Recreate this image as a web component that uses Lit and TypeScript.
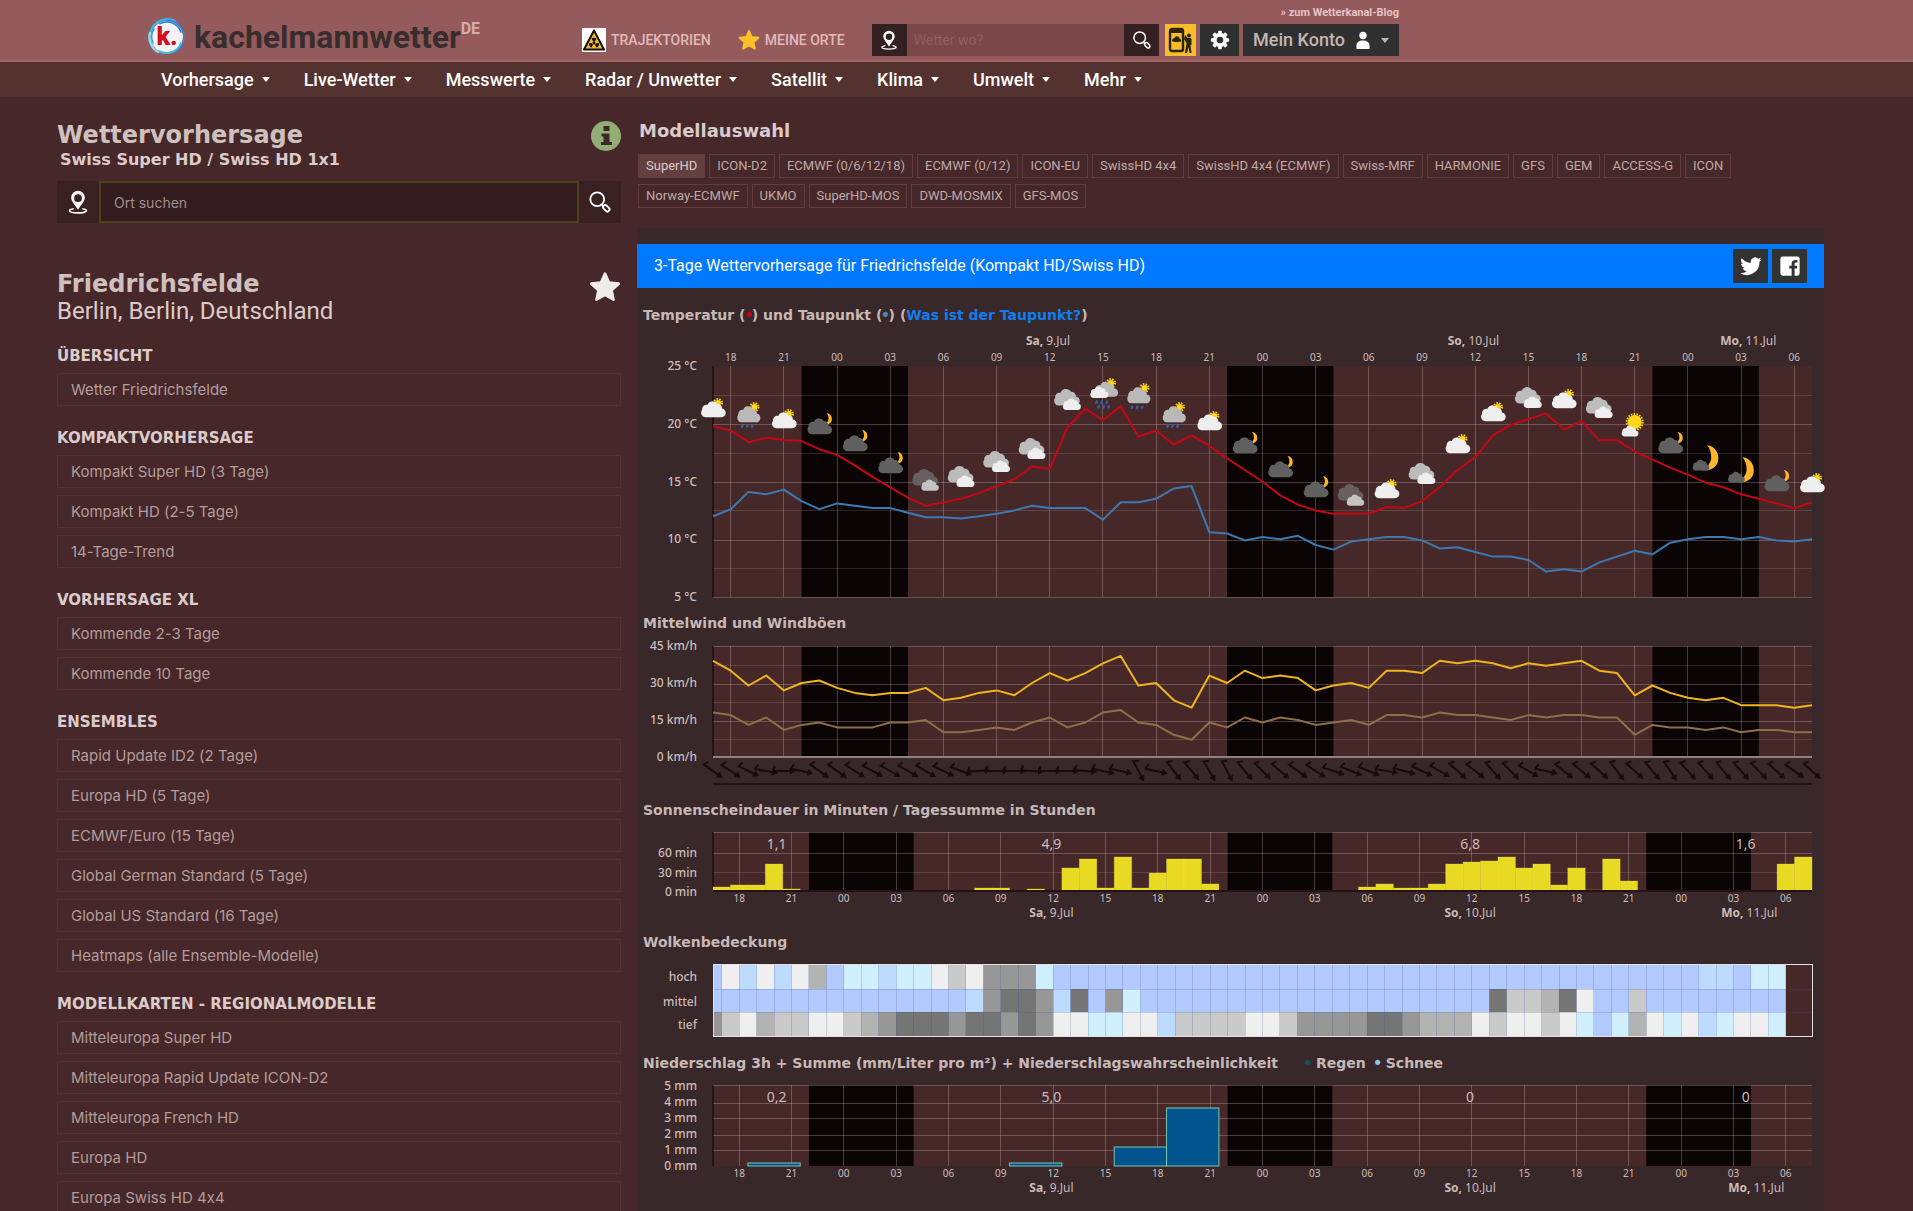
import { LitElement, html, svg, css, nothing } from "lit";
import { customElement } from "lit/decorators.js";

/* ---------- navigation and list data ---------- */

const NAV = ["Vorhersage", "Live-Wetter", "Messwerte", "Radar / Unwetter", "Satellit", "Klima", "Umwelt", "Mehr"];

const MODELS = [
  "SuperHD", "ICON-D2", "ECMWF (0/6/12/18)", "ECMWF (0/12)", "ICON-EU", "SwissHD 4x4", "SwissHD 4x4 (ECMWF)",
  "Swiss-MRF", "HARMONIE", "GFS", "GEM", "ACCESS-G", "ICON",
  "Norway-ECMWF", "UKMO", "SuperHD-MOS", "DWD-MOSMIX", "GFS-MOS",
];

const GROUPS: { title: string; items: string[] }[] = [
  { title: "Übersicht", items: ["Wetter Friedrichsfelde"] },
  { title: "Kompaktvorhersage", items: ["Kompakt Super HD (3 Tage)", "Kompakt HD (2-5 Tage)", "14-Tage-Trend"] },
  { title: "Vorhersage XL", items: ["Kommende 2-3 Tage", "Kommende 10 Tage"] },
  {
    title: "Ensembles",
    items: [
      "Rapid Update ID2 (2 Tage)", "Europa HD (5 Tage)", "ECMWF/Euro (15 Tage)",
      "Global German Standard (5 Tage)", "Global US Standard (16 Tage)", "Heatmaps (alle Ensemble-Modelle)",
    ],
  },
  {
    title: "Modellkarten - Regionalmodelle",
    items: ["Mitteleuropa Super HD", "Mitteleuropa Rapid Update ICON-D2", "Mitteleuropa French HD", "Europa HD", "Europa Swiss HD 4x4"],
  },
];

/* ---------- forecast data, hourly from Friday 17:00 ---------- */

const TEMP = [
  19.8, 19.4, 18.4, 18.8, 18.6, 18.5, 17.8, 17.3, 16.4, 15.4, 14.5, 13.6, 12.9, 13.2, 13.5, 14.0, 14.6, 15.2, 16.3, 16.1,
  19.7, 21.3, 20.3, 21.5, 18.9, 19.4, 18.2, 19.0, 18.1, 17.0, 16.0, 15.0, 13.8, 13.0, 12.5, 12.2, 12.2, 12.2, 12.8, 12.7,
  13.3, 14.5, 16.0, 17.1, 19.0, 19.9, 20.4, 20.9, 19.5, 20.2, 18.6, 18.6, 17.6, 16.9, 16.2, 15.6, 14.9, 14.5, 13.9, 13.5,
  13.1, 12.7, 13.2,
];
const DEW = [
  12.0, 12.6, 14.1, 13.9, 14.3, 13.3, 12.6, 13.1, 12.9, 12.7, 12.7, 12.3, 11.9, 11.9, 11.8, 12.0, 12.2, 12.5, 12.9, 12.7,
  12.7, 12.7, 11.7, 13.2, 13.2, 13.5, 14.4, 14.6, 10.6, 10.5, 9.9, 10.2, 10.0, 10.3, 9.5, 9.1, 9.8, 10.0, 10.2, 10.2,
  9.9, 9.2, 9.3, 8.9, 8.5, 8.5, 8.2, 7.2, 7.4, 7.2, 8.0, 8.5, 9.0, 8.7, 9.7, 10.0, 10.2, 10.2, 10.0, 10.2,
  9.9, 9.8, 10.0,
];
const GUST = [
  39, 35, 29, 33, 27, 30, 31, 28, 26, 25, 26, 26, 28, 23, 24, 26, 27, 25, 30, 34, 31, 34, 38, 41, 29, 30, 23, 20, 33, 30,
  35, 32, 33, 32, 27, 29, 30, 28, 35, 35, 34, 39, 38, 39, 38, 36, 38, 37, 38, 39, 35, 34, 25, 29, 26, 24, 23, 24, 21, 21,
  21, 20, 21,
];
const WIND = [
  18, 17, 13, 16, 11, 13, 14, 12, 12, 12, 14, 14, 15, 10, 10, 11, 12, 11, 14, 16, 12, 14, 18, 19, 14, 13, 9, 7, 14, 12,
  16, 14, 16, 15, 13, 14, 15, 13, 17, 17, 16, 18, 17, 17, 16, 15, 17, 16, 17, 17, 16, 16, 9, 13, 12, 12, 11, 12, 10, 11,
  11, 10, 10,
];
const WIND_ANGLE = [
  35, 33, 26, 10, 0, 12, 35, 35, 33, 28, 30, 30, 30, 26, 20, -3, 0, 0, 3, 0, 0, 4, 12, 12, 62, 12, 52, 50, 60, 62,
  50, 45, 40, 35, 33, 18, 22, 22, 10, 15, 25, 30, 42, 38, 48, 45, 30, 12, 38, 40, 42, 52, 42, 50, 56, 48, 48, 50, 48, 45,
  42, 35, 42,
];

type Kind = "sunCloud" | "sunRain" | "sunShower" | "moonCloud" | "darkClouds" | "clouds" | "sunny" | "moon";
const SYMBOLS: [Kind, number][] = [
  ["sunCloud", 83], ["sunRain", 90], ["sunCloud", 94], ["moonCloud", 100], ["moonCloud", 117], ["moonCloud", 139],
  ["darkClouds", 155], ["clouds", 151], ["clouds", 136], ["clouds", 123], ["clouds", 74], ["sunShower", 66],
  ["sunRain", 71], ["sunRain", 90], ["sunCloud", 96], ["moonCloud", 119], ["moonCloud", 143], ["moonCloud", 163],
  ["darkClouds", 170], ["sunCloud", 164], ["clouds", 148], ["sunCloud", 119], ["sunCloud", 87], ["clouds", 72],
  ["sunCloud", 74], ["clouds", 82], ["sunny", 99], ["moonCloud", 119], ["moon", 133], ["moon", 145],
  ["moonCloud", 157], ["sunCloud", 158],
];

/* hour offset from Friday 16:30 → minutes of sunshine */
const SUN: [number, number][] = [
  [0, 7], [1, 9], [2, 9], [3, 42], [4, 3], [15, 4], [16, 4], [18, 3], [20, 37], [21, 51], [22, 4], [23, 54], [24, 5],
  [25, 29], [26, 51], [27, 51], [28, 11], [37, 7], [38, 11], [39, 5], [40, 4], [41, 11], [42, 43], [43, 45], [44, 47],
  [45, 54], [46, 37], [47, 43], [48, 9], [49, 37], [50, 2], [51, 50], [52, 16], [61, 42], [62, 54],
];
const RAIN: [number, number][] = [[2, 0.2], [17, 0.2], [23, 1.2], [26, 3.6]];

/* one letter per hour, the first one covers half an hour */
const CLOUD_ROWS = [
  { y: 12, h: 25, cells: "b" + "wcwcwmb" + "llcllwgwdddlbbbbbbbbbbbb" + "bbbbbbbbbbbbbbbbbbbbbbbb" + "bccbll" },
  { y: 37, h: 23, cells: "b" + "bbbbbbb" + "bbbbbbbcdkkdckbdlbbbbbbb" + "bbbbbbbbbbbbbkggmkwbbgbb" + "bbbbbb" },
  { y: 60, h: 24, cells: "d" + "gwmggww" + "gmdkkkdkkdkdwwllwwcggggw" + "wgddddkkdmmmwgwwgwlblmwl" + "wclwwl" },
];
const CLOUD_COLORS: Record<string, string> = {
  b: "#b2caff", c: "#bcdbff", l: "#d0efff", w: "#efefef", g: "#cacaca", m: "#b3b3b3", d: "#979797", k: "#757575",
};

/* ---------- chart scales ---------- */

interface Scale { start: number; span: number }
const LINES: Scale = { start: 17, span: 62 };
const BARS: Scale = { start: 16.5, span: 63 };
const pct = (hour: number, s: Scale) => `${(((hour - s.start) / s.span) * 100).toFixed(3)}%`;
const part = (hours: number, s: Scale) => `${((hours / s.span) * 100).toFixed(3)}%`;
const NIGHTS = [22, 46, 70];
const TICKS = Array.from({ length: 21 }, (_, i) => 18 + i * 3);
const two = (h: number) => String(h % 24).padStart(2, "0");

const backdrop = (s: Scale, y: number, h: number) => svg`
  <rect class="plot" x="0" y=${y} width="100%" height=${h}></rect>
  ${NIGHTS.map((n) => svg`<rect class="night" x=${pct(n, s)} y=${y} width=${part(6, s)} height=${h}></rect>`)}
  ${TICKS.map((t) => svg`<line class="grid" x1=${pct(t, s)} x2=${pct(t, s)} y1=${y} y2=${y + h}></line>`)}
  <line class="axis" x1="0" x2="0" y1=${y} y2=${y + h}></line>`;

const rule = (y: number, cls = "grid") => svg`<line class=${cls} x1="0" x2="100%" y1=${y} y2=${y}></line>`;
const yLabel = (y: number, text: string) => svg`<text class="ylabel" x="-16" y=${y + 4}>${text}</text>`;
const hours = (s: Scale, y: number) =>
  TICKS.map((t) => svg`<text class="hour" x=${pct(t, s)} y=${y}>${two(t)}</text>`);
const dates = (s: Scale, y: number, last: number) =>
  ([["Sa", "9.Jul", 35.9], ["So", "10.Jul", 59.9], ["Mo", "11.Jul", last]] as [string, string, number][]).map(
    ([day, rest, at]) => svg`<text class="date" x=${pct(at, s)} y=${y}><tspan class="day">${day},</tspan> ${rest}</text>`,
  );
const totals = (values: string[], y: number) =>
  values.map((v, i) => svg`<text class="total" x=${pct([20.15, 35.9, 59.9, 75.7][i], BARS)} y=${y}>${v}</text>`);

const points = (data: number[], max: number, scale: number) =>
  data.map((v, i) => `${i},${((max - v) * scale).toFixed(1)}`).join(" ");
const curve = (data: number[], max: number, min: number, y: number, h: number, cls: string) => svg`
  <svg class="layer" x="0" y=${y} width="100%" height=${h} viewBox=${`0 0 62 ${h}`} preserveAspectRatio="none">
    <polyline class=${cls} points=${points(data, max, h / (max - min))}></polyline>
  </svg>`;

/* ---------- weather symbols, centred on 0,0 ---------- */

const cloud = (fill: string, transform = "") => svg`
  <path transform=${transform} fill=${fill}
    d="M-8 8.500a4.800 4.800 0 0 1-3.400-7.800A4.500 4.500 0 0 1-6-4.200 6 6 0 0 1 4.600-5.200 4.600 4.600 0 0 1 9.400-.6 4.600 4.600 0 0 1 8 8.500z"></path>`;
const sun = (x: number, y: number, r: number) => svg`
  <g transform=${`translate(${x} ${y})`}>
    <circle r=${r} fill="#ffd61c"></circle>
    <circle r=${r + 1} fill="none" stroke="#ffd61c" stroke-width="2" stroke-dasharray="1.5 1.3"></circle>
  </g>`;
const moon = (transform: string) => svg`
  <path transform=${transform} fill="#fdb62b" d="M-1-7.500C4-7 6.500-2.500 5.500 2 4.500 6 0 8-4 7-.5 5.500 1.500 2.500 1.500-.500 1.500-3.500 .5-6-1-7.500z"></path>`;
const drops = (rows: number) => svg`
  <g stroke="#2f5fa8" stroke-width="2.400" stroke-linecap="round">
    ${[-6, -1, 4].map((x) => svg`<path d=${`M${x} 10.500l-.6 1.400`}></path>`)}
    ${rows > 1 ? [-4, 1, 6].map((x) => svg`<path d=${`M${x} 15l-.6 1.400`}></path>`) : nothing}
  </g>`;

const symbol = (kind: Kind) => {
  switch (kind) {
    case "sunCloud": return svg`${sun(5, -5, 3)}${cloud("#eeeeee", "translate(0 1)scale(.96)")}`;
    case "sunRain": return svg`${sun(6, -8, 3)}${cloud("#b9b9b9", "translate(0 -1)scale(.9 .98)")}${drops(1)}`;
    case "sunShower": return svg`${sun(8, -8, 3)}${cloud("#b9b9b9", "translate(3 -2)scale(.92)")}${cloud("#eeeeee", "translate(-4 1)scale(.7)")}${drops(2)}`;
    case "moonCloud": return svg`${moon("translate(8 -6)scale(.8)")}${cloud("#606060", "translate(0 1)scale(.96)")}`;
    case "darkClouds": return svg`${cloud("#686060", "translate(-1 -3)")}${cloud("#c4c2c2", "translate(4 5)scale(.68)")}`;
    case "clouds": return svg`${cloud("#bcbcbc", "translate(-1 -2)")}${cloud("#eeeeee", "translate(4 5)scale(.7)")}`;
    case "sunny": return svg`${sun(0, -2, 7)}${cloud("#eeeeee", "translate(-5 7)scale(.65)")}`;
    case "moon": return svg`${moon("translate(3 0)scale(1.700)")}${cloud("#606060", "translate(-5 7)scale(.65)")}`;
  }
};

/* ---------- interface icons ---------- */

const pinIcon = html`<svg class="icon" viewBox="0 0 24 28" aria-hidden="true">
  <path fill="#fff" fill-rule="evenodd" d="M12 1a8 8 0 0 0-8 8c0 4 5 9 8 14 3-5 8-10 8-14a8 8 0 0 0-8-8zm0 4a4.500 4.500 0 1 1 0 9 4.500 4.500 0 0 1 0-9z"></path>
  <path fill="none" stroke="#fff" stroke-width="1.800" d="M7 22c-3 .5-5 1.300-5 2.300 0 3.200 20 3.200 20 0 0-1-2-1.800-5-2.300"></path></svg>`;
const lensIcon = html`<svg class="icon" viewBox="0 0 26 26" aria-hidden="true" fill="none" stroke="#fff">
  <circle cx="10" cy="10" r="7.500" stroke-width="2"></circle><path stroke-width="2" d="M15 16l2 2"></path>
  <rect x="-2.300" y="0" width="4.600" height="8" rx="2.300" stroke-width="2" transform="translate(17 17) rotate(-45)"></rect></svg>`;
const starIcon = (fill: string) => html`<svg class="star" viewBox="0 0 24 24" aria-hidden="true">
  <path fill=${fill} stroke=${fill} stroke-width="2" stroke-linejoin="round"
    d="M12 2l3 6.700 7.300.8-5.400 4.900 1.500 7.100L12 17.900l-6.400 3.600 1.500-7.100L1.700 9.500 9 8.700z"></path></svg>`;
const gearIcon = html`<svg class="icon" viewBox="0 0 24 24" aria-hidden="true">
  <circle cx="12" cy="12" r="6.300" fill="none" stroke="#fff" stroke-width="4.600"></circle>
  <g fill="#fff">${[0, 45, 90, 135, 180, 225, 270, 315].map(
    (a) => svg`<rect x="9.800" y="1" width="4.400" height="5" rx="1" transform=${`rotate(${a} 12 12)`}></rect>`,
  )}</g></svg>`;
const personIcon = html`<svg class="person" viewBox="0 0 16 22" aria-hidden="true" fill="#fff">
  <circle cx="8" cy="5.500" r="4.500"></circle><path d="M0 22v-4c0-4 3-6.500 8-6.500s8 2.500 8 6.500v4z"></path></svg>`;
const uploadIcon = html`<svg class="upload" viewBox="0 0 26 26" aria-hidden="true">
  <rect x="2" y="2" width="13" height="22" rx="2" fill="none" stroke="#2c2407" stroke-width="2.400"></rect>
  <path fill="#2c2407" d="M2 3h13v3H2zM4 14c0-2 1.500-3 2.500-3 1-2.500 4.500-2 5 .5 2 .3 2 3.500.5 3.500l-1-.5-1 1-1-1-1 1-1-1-1 .5zM17 8l2.500 3h3l1 1v6l-1 0 1 8h-2l-1-6-1.500 6h-2l1.500-10-2.500-4z"></path>
  <circle cx="21" cy="8.500" r="2" fill="#2c2407"></circle></svg>`;
const hazardIcon = html`<svg class="hazard" viewBox="0 0 24 24" aria-hidden="true">
  <rect width="24" height="24" fill="#fff"></rect>
  <path d="M12 2.500L22 21.500H2z" fill="#f0b92d" stroke="#161007" stroke-width="2" stroke-linejoin="round"></path>
  <circle cx="12" cy="15" r="1.400" fill="#161007"></circle>
  <path fill="#161007" d="M11.200 13.600L9.400 10.600a5.200 5.200 0 0 1 5.200 0L12.800 13.600a1.800 1.800 0 0 0-1.600 0zM10.200 15.200H6.700a5.300 5.300 0 0 0 2.600 4.500l1.800-2.900a1.900 1.900 0 0 1-.9-1.600zM13.800 15.200h3.500a5.300 5.300 0 0 1-2.600 4.500l-1.800-2.900a1.900 1.900 0 0 0 .9-1.600z"></path></svg>`;
const infoIcon = html`<svg class="info" viewBox="0 0 30 30" aria-hidden="true">
  <circle cx="15" cy="15" r="15" fill="#93ae74"></circle>
  <path fill="#3c2626" d="M12.500 5h6v5h-6zM10.500 12.500h8v8.500h2.500v3H10v-3h2.500v-5.500h-2z"></path></svg>`;
const birdIcon = html`<svg class="share" viewBox="0 0 24 24" aria-hidden="true">
  <path fill="#fff" d="M23.600 4.900c-.8.400-1.800.7-2.700.8 1-.6 1.700-1.500 2.100-2.600-.9.500-1.900.9-3 1.100a4.800 4.800 0 0 0-8.200 4.400C7.800 8.400 4.200 6.500 1.900 3.600a4.800 4.800 0 0 0 1.500 6.400c-.8 0-1.500-.2-2.200-.6 0 2.300 1.600 4.300 3.800 4.800-.7.200-1.400.2-2.100.1.600 1.900 2.400 3.300 4.400 3.300A9.600 9.600 0 0 1 .3 19.600a13.500 13.500 0 0 0 20.900-12c.9-.7 1.700-1.600 2.400-2.700z"></path></svg>`;
const fbIcon = html`<svg class="share" viewBox="0 0 24 24" aria-hidden="true">
  <path fill="#fff" fill-rule="evenodd" d="M4 1.500h16A2.500 2.500 0 0 1 22.500 4v16a2.500 2.500 0 0 1-2.500 2.500h-3V14.700h2.500l.4-3H17V9.800c0-.9.300-1.500 1.600-1.500h1.600V5.600c-3.800-.5-6.400.4-6.400 3.800v2.300h-2.600v3h2.600v7.800H4A2.500 2.500 0 0 1 1.500 20V4A2.500 2.500 0 0 1 4 1.500z"></path></svg>`;
const logoIcon = html`<svg class="logo-mark" viewBox="0 0 38 38" aria-hidden="true">
  <circle cx="19" cy="19" r="16" fill="#f7f3f5"></circle>
  <g fill="none" stroke-linecap="round">
    <path d="M27 3A17.500 17.500 0 0 0 3 13" stroke="#35b9e6" stroke-width="2.400"></path>
    <path d="M2 15a17.500 17.500 0 0 0 8 19" stroke="#8fdcf2" stroke-width="2.600"></path>
    <path d="M12 5.500A15 15 0 0 1 33 14" stroke="#2f87d8" stroke-width="1.800"></path>
    <path d="M20 2.200A17 17 0 0 1 36 18c0 7-4 14-10 16" stroke="#3b7fd4" stroke-width="1.600"></path>
    <path d="M33 25A15.500 15.500 0 0 1 12 33.500" stroke="#46bfe8" stroke-width="2"></path>
    <path d="M6 11a15 15 0 0 0-1 14" stroke="#2c9bdc" stroke-width="1.500"></path>
  </g></svg>`;

/* ---------- charts ---------- */

@customElement("forecast-charts")
export class ForecastCharts extends LitElement {
  static styles = css`
    :host { display: block; padding: 17px 12px 0 6px; }
    .title { margin: 0; height: 20px; font: 700 14px/20px "DejaVu Sans", sans-serif; color: #c6b8b7; white-space: nowrap; }
    .title a { color: #0f7df0; text-decoration: none; }
    .dot { font: 700 18px/18px "Liberation Sans", sans-serif; }
    .red { color: #c3000f; }
    .blue { color: #4a86b4; }
    .legend { margin-left: 22px; }
    .legend + .legend { margin-left: 4px; }
    .rain { color: #0b5468; }
    .snow { color: #8ec5f0; }
    .frame { padding-left: 70px; }
    .chart { display: block; width: 100%; overflow: visible; font-family: "Noto Sans", "Open Sans", sans-serif; }
    .tall { height: 288px; }
    .wind { height: 167px; }
    .sun { height: 112px; }
    .cloud { height: 101px; }
    .precip { height: 150px; }
    .layer { overflow: visible; }
    .plot { fill: #472829; }
    .night { fill: #0a0404; }
    .grid { stroke: rgba(225, 205, 200, 0.28); stroke-width: 1; shape-rendering: crispEdges; }
    .faint { stroke: rgba(225, 205, 200, 0.16); stroke-width: 1; shape-rendering: crispEdges; }
    .axis { stroke: #221416; stroke-width: 2; }
    .base { stroke: #918182; stroke-width: 2; shape-rendering: crispEdges; }
    .dark { stroke: #241214; stroke-width: 2; shape-rendering: crispEdges; }
    polyline { fill: none; stroke-width: 2; vector-effect: non-scaling-stroke; stroke-linejoin: round; }
    .temp { stroke: #c40713; }
    .dew { stroke: #3b79b0; }
    .gust { stroke: #f0b41c; }
    .mean { stroke: #8e7048; }
    .ylabel { fill: #cbbcbb; font-size: 12px; font-weight: 500; text-anchor: end; }
    .hour { fill: #cbbcbb; font-size: 10px; text-anchor: middle; }
    .date { fill: #cbbcbb; font-size: 12px; text-anchor: middle; }
    .day { font-weight: 700; }
    .total { fill: #cbbcbb; font-size: 14px; text-anchor: middle; }
    .bar { fill: #e8da23; stroke: #f3e94e; stroke-width: 1; stroke-opacity: 0.3; }
    .rainbar { fill: #00538c; stroke: #7cc7b4; stroke-width: 1; }
    .arrow { stroke: #190b0c; fill: none; stroke-width: 2; }
    .head { fill: #190b0c; stroke: none; }
    .seam { stroke: rgba(60, 80, 150, 0.22); stroke-width: 1; shape-rendering: crispEdges; }
    .outline { fill: none; stroke: #e6dfe2; stroke-width: 1; shape-rendering: crispEdges; }
  `;

  private temperature() {
    return svg`<svg class="chart tall" role="img" aria-label="Temperatur und Taupunkt">
      ${dates(LINES, 20, 75.4)} ${hours(LINES, 36)}
      ${backdrop(LINES, 41, 231)}
      ${[70, 128, 185, 243].map((y) => rule(y, "faint"))}
      ${[99, 157, 215, 272].map((y) => rule(y))}
      ${[25, 20, 15, 10, 5].map((v, i) => yLabel(41 + Math.round(i * 57.75), `${v} °C`))}
      ${curve(DEW, 25, 5, 41, 231, "dew")}
      ${curve(TEMP, 25, 5, 41, 231, "temp")}
      ${SYMBOLS.map(([kind, y], i) => svg`
        <svg class="layer" x=${pct(17 + i * 2, LINES)} y=${y} width="1" height="1">${symbol(kind)}</svg>`)}
    </svg>`;
  }

  private wind() {
    return svg`<svg class="chart wind" role="img" aria-label="Mittelwind und Windböen">
      ${backdrop(LINES, 13, 111)}
      ${[32, 69, 106].map((y) => rule(y, "faint"))}
      ${[13, 51, 88].map((y) => rule(y))}
      ${rule(124, "base")}
      ${[45, 30, 15, 0].map((v, i) => yLabel(13 + i * 37, `${v} km/h`))}
      ${curve(WIND, 45, 0, 13, 111, "mean")}
      ${curve(GUST, 45, 0, 13, 111, "gust")}
      ${WIND_ANGLE.map((a, i) => svg`
        <svg class="layer" x=${pct(17 + i, LINES)} y="138" width="1" height="1">
          <g transform=${`rotate(${a})`}>
            <path class="arrow" d="M-9-5L-11 0H8"></path><path class="head" d="M12 0L6-3.500V3.500z"></path>
          </g>
        </svg>`)}
      ${rule(151, "dark")}
    </svg>`;
  }

  private sunshine() {
    return svg`<svg class="chart sun" role="img" aria-label="Sonnenscheindauer">
      ${backdrop(BARS, 12, 59)}
      ${rule(12)} ${rule(33)} ${rule(52, "faint")}
      ${SUN.map(([at, min]) => {
        const h = Math.round((min / 60) * 38);
        return svg`<rect class="bar" x=${part(at, BARS)} y=${71 - h} width=${part(1, BARS)} height=${h}></rect>`;
      })}
      ${rule(71, "dark")}
      ${yLabel(33, "60 min")} ${yLabel(53, "30 min")} ${yLabel(72, "0 min")}
      ${totals(["1,1", "4,9", "6,8", "1,6"], 29)}
      ${hours(BARS, 82)} ${dates(BARS, 97, 75.9)}
    </svg>`;
  }

  private clouds() {
    return svg`<svg class="chart cloud" role="img" aria-label="Wolkenbedeckung">
      <rect class="plot" x="0" y="12" width="100%" height="72"></rect>
      ${CLOUD_ROWS.map((row) => row.cells.split("").map((c, i, all) => svg`
        <rect x=${i ? part(i - 0.5, BARS) : "0"} y=${row.y} height=${row.h} fill=${CLOUD_COLORS[c]}
          width=${part((i ? 1 : 0.5) + (i < all.length - 1 ? 0.05 : 0), BARS)}></rect>`))}
      ${Array.from({ length: 61 }, (_, i) => svg`
        <line class="seam" x1=${part(i + 0.5, BARS)} x2=${part(i + 0.5, BARS)} y1="12" y2="84"></line>`)}
      ${rule(37, "seam")} ${rule(60, "seam")}
      <rect class="outline" x="0" y="12" width="100%" height="72"></rect>
      ${yLabel(25, "hoch")} ${yLabel(50, "mittel")} ${yLabel(73, "tief")}
    </svg>`;
  }

  private precipitation() {
    return svg`<svg class="chart precip" role="img" aria-label="Niederschlag">
      ${backdrop(BARS, 12, 81)}
      ${[12, 30, 45, 62, 77].map((y) => rule(y))}
      ${RAIN.map(([at, mm]) => {
        const h = Math.round(mm * 16);
        return svg`<rect class="rainbar" x=${part(at, BARS)} y=${93 - h} width=${part(3, BARS)} height=${h}></rect>`;
      })}
      ${[5, 4, 3, 2, 1, 0].map((v, i) => yLabel(13 + i * 16, `${v} mm`))}
      ${totals(["0,2", "5,0", "0", "0"], 29)}
      ${hours(BARS, 104)} ${dates(BARS, 119, 76.3)}
    </svg>`;
  }

  render() {
    return html`
      <h3 class="title">Temperatur (<span class="dot red">•</span>) und Taupunkt (<span class="dot blue">•</span>) (<a href="#taupunkt">Was ist der Taupunkt?</a>)</h3>
      <div class="frame">${this.temperature()}</div>
      <h3 class="title">Mittelwind und Windböen</h3>
      <div class="frame">${this.wind()}</div>
      <h3 class="title">Sonnenscheindauer in Minuten / Tagessumme in Stunden</h3>
      <div class="frame">${this.sunshine()}</div>
      <h3 class="title">Wolkenbedeckung</h3>
      <div class="frame">${this.clouds()}</div>
      <h3 class="title">Niederschlag 3h + Summe (mm/Liter pro m²) + Niederschlagswahrscheinlichkeit
        <span class="legend"><span class="dot rain">•</span> Regen</span>
        <span class="legend"><span class="dot snow">•</span> Schnee</span></h3>
      <div class="frame">${this.precipitation()}</div>
    `;
  }
}

/* ---------- page ---------- */

@customElement("app-root")
export class AppRoot extends LitElement {
  static styles = css`
    :host {
      display: flex; flex-direction: column; height: 100vh; overflow: hidden;
      background: #46282a; color: #dccbca; font: 15px/20px Inter, "Liberation Sans", sans-serif;
      font-variant-ligatures: no-contextual;
    }
    * { box-sizing: border-box; }
    a { color: inherit; text-decoration: none; }
    button { font: inherit; color: inherit; border: 0; padding: 0; display: flex; align-items: center; justify-content: center; cursor: pointer; }
    .caret { border: 4px solid transparent; border-top: 5px solid currentColor; border-bottom: 0; }

    .top { background: #955a5b; border-bottom: 2px solid #a06364; flex: none; }
    .top-inner { display: flex; align-items: flex-end; gap: 27px; max-width: 1399px; height: 60px; padding: 0 0 4px 148px; font-family: Roboto, sans-serif; }
    .logo { display: flex; align-items: center; gap: 8px; flex: 0 0 407px; height: 38px; color: #382d2d; }
    .logo-badge { display: grid; place-items: center; }
    .logo-badge > * { grid-area: 1 / 1; }
    .logo-mark { width: 38px; height: 38px; }
    .logo-k { z-index: 1; color: #d30f1c; font-size: 25px; font-weight: 900; line-height: 38px; }
    .logo-name { font-size: 32px; font-weight: 700; line-height: 38px; }
    .logo-land { align-self: flex-start; margin-left: -8px; font-size: 16px; font-weight: 700; line-height: 22px; color: #d8a9aa; }
    .quick { display: flex; align-items: center; gap: 5px; height: 32px; font-size: 14px; font-weight: 500; color: #e2babb; white-space: nowrap; }
    .hazard { width: 24px; height: 24px; }
    .quick .star { width: 22px; height: 22px; }
    .tools { display: flex; flex-direction: column; gap: 4px; flex: 1; }
    .blog { align-self: flex-end; font: 700 11px/14px Roboto, sans-serif; color: #e6c3c4; }
    .tool-row { display: flex; gap: 4px; }
    .search { display: flex; flex: 1; height: 32px; margin-right: 2px; }
    .search input { flex: 1; min-width: 0; border: 0; padding: 0 7px; background: #7b4748; color: #e2babb; font: 14px Roboto, sans-serif; outline: 0; }
    .search input::placeholder { color: #905f60; opacity: 1; }
    .search button { width: 35px; background: #352021; }
    .icon { width: 20px; height: 20px; }
    .upload-btn { width: 31px; background: #f8bd2b; }
    .upload { width: 26px; height: 26px; }
    .dark-btn { background: #303030; height: 32px; }
    .gear { width: 39px; }
    .account { gap: 10px; width: 156px; font-size: 18px; font-weight: 500; color: #c3b6b6; }
    .person { width: 16px; height: 18px; }

    .nav { display: flex; flex: none; gap: 34px; height: 35px; padding-left: 161px; background: #543230; color: #fff; }
    .nav a { display: flex; align-items: center; gap: 8px; font: 500 18px/36px Roboto, sans-serif; white-space: nowrap; }

    .page { display: grid; grid-template-columns: minmax(0, 564fr) minmax(0, 1187fr); gap: 16px; flex: 1; padding: 0 89px 0 57px; }
    .side { padding-top: 23px; }
    .head { display: flex; justify-content: space-between; align-items: flex-start; }
    .h1 { margin: 0; font: 700 24px/30px "DejaVu Sans", sans-serif; color: #cfc0be; }
    .sub { margin: 0; padding-left: 3px; font: 700 16px/20px "DejaVu Sans", sans-serif; }
    .info { width: 30px; height: 30px; margin-top: 1px; display: block; }
    .place { display: flex; height: 42px; margin: 11px 0 46px; background: #3a2021; }
    .place button { width: 42px; background: #392122; }
    .place .icon { width: 24px; height: 24px; }
    .place input { flex: 1; min-width: 0; border: 2px solid #4d4119; background: #321c1e; padding: 0 13px; color: #dccbca; font: 14px Inter, sans-serif; outline: 0; }
    .place input::placeholder { color: #a08f8e; opacity: 1; }
    .region { margin: 0; font: 400 24px/24px Roboto, sans-serif; }
    .head .star { width: 32px; height: 32px; margin-top: 2px; display: block; }
    .fav { background: none; }
    .group { margin: 23px 0 7px; font: 700 15px/20px "DejaVu Sans", sans-serif; text-transform: uppercase; }
    .list + .group { margin: 22px 0 7px; }
    .list { display: flex; flex-direction: column; gap: 7px; margin: 0; padding: 0; list-style: none; }
    .list a { display: block; border: 1px solid #523132; padding: 0 13px; line-height: 31px; color: #b39c9b; }

    .main { display: flex; flex-direction: column; padding-top: 22px; }
    .h2 { margin: 0 2px 11px; font: 700 18px/24px "DejaVu Sans", sans-serif; }
    .models { display: flex; flex-wrap: wrap; gap: 6px 4px; margin: 0 90px 20px 1px; }
    .models a { border: 1px solid #633d3e; padding: 0 7px; font: 13px/22px Roboto, sans-serif; color: #bfa8a7; }
    .models .on { background: #633f40; color: #dccbca; }
    .panel { flex: 1; background: #382829; padding-top: 16px; }
    .bar { display: flex; align-items: center; gap: 4px; height: 44px; padding: 0 17px; background: #0079fe; color: #fff; }
    .bar h2 { flex: 1; margin: 0; font: 400 16px/20px Roboto, sans-serif; }
    .bar button { width: 35px; height: 34px; background: #333334; }
    .share { width: 22px; height: 22px; }
  `;

  render() {
    return html`
      <header class="top">
        <div class="top-inner">
          <a class="logo" href="#start" aria-label="kachelmannwetter">
            <span class="logo-badge">${logoIcon}<span class="logo-k">k.</span></span>
            <span class="logo-name">kachelmannwetter</span>
            <span class="logo-land">DE</span>
          </a>
          <a class="quick" href="#trajektorien">${hazardIcon}TRAJEKTORIEN</a>
          <a class="quick" href="#orte">${starIcon("#fbc02a")}MEINE ORTE</a>
          <div class="tools">
            <a class="blog" href="#blog">» zum Wetterkanal-Blog</a>
            <div class="tool-row">
              <form class="search">
                <button type="button" aria-label="Standort">${pinIcon}</button>
                <input type="text" aria-label="Wetter wo?" placeholder="Wetter wo?" />
                <button type="button" aria-label="Suchen">${lensIcon}</button>
              </form>
              <button class="upload-btn" aria-label="Wetter melden">${uploadIcon}</button>
              <button class="dark-btn gear" aria-label="Einstellungen">${gearIcon}</button>
              <button class="dark-btn account">Mein Konto ${personIcon}<span class="caret"></span></button>
            </div>
          </div>
        </div>
      </header>
      <nav class="nav">${NAV.map((n) => html`<a href="#menu">${n}<span class="caret"></span></a>`)}</nav>
      <div class="page">
        <aside class="side">
          <div class="head">
            <div>
              <h1 class="h1">Wettervorhersage</h1>
              <p class="sub">Swiss Super HD / Swiss HD 1x1</p>
            </div>
            <a href="#info" aria-label="Info">${infoIcon}</a>
          </div>
          <form class="place">
            <button type="button" aria-label="Standort">${pinIcon}</button>
            <input type="text" aria-label="Ort suchen" placeholder="Ort suchen" />
            <button type="button" aria-label="Suchen">${lensIcon}</button>
          </form>
          <div class="head">
            <div>
              <h2 class="h1">Friedrichsfelde</h2>
              <p class="region">Berlin, Berlin, Deutschland</p>
            </div>
            <button class="fav" aria-label="Ort merken">${starIcon("#eeeaea")}</button>
          </div>
          ${GROUPS.map((g) => html`
            <h3 class="group">${g.title}</h3>
            <ul class="list">${g.items.map((i) => html`<li><a href="#vorhersage">${i}</a></li>`)}</ul>`)}
        </aside>
        <main class="main">
          <h2 class="h2">Modellauswahl</h2>
          <div class="models">${MODELS.map((m, i) => html`<a href="#modell" class=${i ? "" : "on"}>${m}</a>`)}</div>
          <section class="panel">
            <div class="bar">
              <h2>3-Tage Wettervorhersage für Friedrichsfelde (Kompakt HD/Swiss HD)</h2>
              <button aria-label="Twitter">${birdIcon}</button>
              <button aria-label="Facebook">${fbIcon}</button>
            </div>
            <forecast-charts></forecast-charts>
          </section>
        </main>
      </div>
    `;
  }
}
